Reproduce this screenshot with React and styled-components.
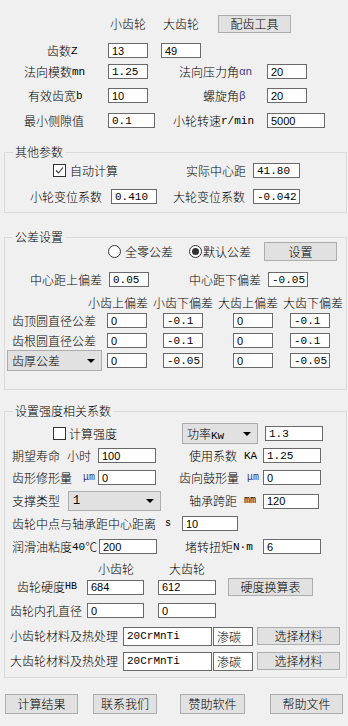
import React from "react";
import styled, { createGlobalStyle } from "styled-components";

const GlobalStyle = createGlobalStyle`
  html, body {
    margin: 0;
    padding: 0;
    background: #f0f0f0;
  }
  body {
    font-family: "Noto Sans CJK SC", "Noto Sans", sans-serif;
    font-size: 12px;
    font-weight: 300;
    color: #000;
  }
`;

const Window = styled.div`
  width: 348px;
  height: 726px;
  overflow: hidden;
  background: #f0f0f0;
`;

const Row = styled.div`
  display: flex;
  align-items: center;
  height: ${(p) => p.$h || 15}px;
  margin-top: ${(p) => p.$mt || 0}px;
  padding-left: ${(p) => p.$pl || 0}px;
`;

const Label = styled.span`
  flex: none;
  display: flex;
  align-items: center;
  box-sizing: border-box;
  width: ${(p) => (p.$w ? `${p.$w}px` : "auto")};
  padding-left: ${(p) => p.$pl || 0}px;
  margin-left: ${(p) => p.$ml || 0}px;
  white-space: nowrap;
  line-height: 14px;
  font-size: 12px;
`;

const Unit = styled.span`
  margin-left: ${(p) => p.$ml || 0}px;
  font-family: "Liberation Mono", monospace;
  font-weight: 400;
  font-size: ${(p) => p.$size || 10}px;
  color: ${(p) => p.$color || "#000"};
`;

const Field = styled.input`
  flex: none;
  box-sizing: border-box;
  width: ${(p) => p.$w}px;
  height: ${(p) => p.$h || 15}px;
  margin: 0 0 0 ${(p) => p.$ml || 0}px;
  padding: 0 0 0 3px;
  border: 1px solid #6a6a6a;
  border-radius: 0;
  background: #fff;
  color: #000;
  outline: none;
  font-family: ${(p) =>
    p.$mono
      ? `"Liberation Mono", monospace`
      : `"Liberation Sans", "Noto Sans CJK SC", sans-serif`};
  font-weight: ${(p) => (p.$cjk ? 300 : 400)};
  font-size: ${(p) => (p.$cjk ? 12 : 11)}px;
`;

const Btn = styled.button`
  flex: none;
  box-sizing: border-box;
  width: ${(p) => p.$w}px;
  height: ${(p) => p.$h || 20}px;
  margin-left: ${(p) => p.$ml || 0}px;
  padding: 0;
  background: #e1e1e1;
  border: 1px solid #adadad;
  border-radius: 0;
  color: #000;
  font-family: "Noto Sans CJK SC", sans-serif;
  font-weight: 300;
  font-size: 12px;
  line-height: 1;
`;

const Group = styled.div`
  position: relative;
  box-sizing: border-box;
  width: 343px;
  height: ${(p) => p.$h}px;
  margin: ${(p) => p.$mt}px 0 0 4px;
  border: 1px solid #dcdcdc;
`;

const GroupTitle = styled.span`
  position: absolute;
  top: -8px;
  left: 8px;
  padding: 0 2px;
  background: #f0f0f0;
  line-height: 14px;
  white-space: nowrap;
`;

const CheckBox = styled.span`
  flex: none;
  box-sizing: border-box;
  width: 13px;
  height: 13px;
  border: 1px solid #333;
  background: #fff;
  display: flex;
  align-items: center;
  justify-content: center;
`;

const Radio = styled.span`
  flex: none;
  box-sizing: border-box;
  width: 13px;
  height: 13px;
  margin-left: ${(p) => p.$ml || 0}px;
  border: 1px solid #333;
  border-radius: 50%;
  background: #fff;
  display: flex;
  align-items: center;
  justify-content: center;

  &::after {
    content: "";
    width: 7px;
    height: 7px;
    border-radius: 50%;
    background: ${(p) => (p.$on ? "#333" : "transparent")};
  }
`;

const Combo = styled.div`
  flex: none;
  box-sizing: border-box;
  width: ${(p) => p.$w}px;
  height: ${(p) => p.$h || 21}px;
  margin-left: ${(p) => p.$ml || 0}px;
  padding: 0 6px 0 4px;
  display: flex;
  align-items: center;
  justify-content: space-between;
  background: #e1e1e1;
  border: 1px solid #adadad;
  white-space: nowrap;
  font-family: ${(p) =>
    p.$mono ? `"Liberation Mono", monospace` : `"Noto Sans CJK SC", sans-serif`};
  font-weight: ${(p) => (p.$mono ? 400 : 300)};
  font-size: 12px;
`;

const Arrow = styled.span`
  width: 0;
  height: 0;
  border-left: 4px solid transparent;
  border-right: 4px solid transparent;
  border-top: 4px solid #000;
`;

const Box = ({ v, ...rest }) => (
  <Field
    readOnly
    defaultValue={v}
    $mono={/[.A-Za-z]/.test(v)}
    $cjk={/[\u4e00-\u9fff]/.test(v)}
    {...rest}
  />
);

const Check = ({ on, text, w, pl, gap }) => (
  <Label $w={w} $pl={pl}>
    <CheckBox>
      {on && (
        <svg width="9" height="9" viewBox="0 0 9 9">
          <path d="M1 4.5 L3.5 7 L8 1.5" stroke="#333" strokeWidth="1.1" fill="none" />
        </svg>
      )}
    </CheckBox>
    <Label $ml={gap}>{text}</Label>
  </Label>
);

const ToleranceRow = ({ label, mt, vals, combo }) => (
  <Row $mt={mt} $h={combo ? 21 : 15}>
    {combo ? (
      <>
        <Combo $w={95} $ml={2}>
          {label}
          <Arrow />
        </Combo>
        <Box v={vals[0]} $w={40} $ml={5} />
      </>
    ) : (
      <>
        <Label $w={102} $pl={7}>{label}</Label>
        <Box v={vals[0]} $w={40} />
      </>
    )}
    <Box v={vals[1]} $w={40} $ml={16} />
    <Box v={vals[2]} $w={40} $ml={30} />
    <Box v={vals[3]} $w={40} $ml={17} />
  </Row>
);

const MaterialRow = ({ label, mt }) => (
  <Row $mt={mt} $h={20}>
    <Label $w={118} $pl={5}>{label}</Label>
    <Box v="20CrMnTi" $w={89} $h={19} />
    <Box v="渗碳" $w={40} $h={19} $ml={1} />
    <Btn $w={83} $h={18} $ml={4}>选择材料</Btn>
  </Row>
);

export default function App() {
  return (
    <Window>
      <GlobalStyle />

      <Row $mt={15} $h={18} $pl={110}>
        <Label $w={53}>小齿轮</Label>
        <Label $w={55}>大齿轮</Label>
        <Btn $w={73} $h={18}>配齿工具</Btn>
      </Row>
      <Row $mt={10}>
        <Label $w={108} $pl={47}>
          齿数<Unit $size={11}>Z</Unit>
        </Label>
        <Box v="13" $w={40} />
        <Box v="49" $w={40} $ml={13} />
      </Row>
      <Row $mt={6}>
        <Label $w={108} $pl={24}>
          法向模数<Unit $size={11}>mn</Unit>
        </Label>
        <Box v="1.25" $w={40} />
        <Label $w={119} $pl={31}>
          法向压力角<Unit $size={11} $color="#3a3a8a">αn</Unit>
        </Label>
        <Box v="20" $w={40} />
      </Row>
      <Row $mt={9}>
        <Label $w={108} $pl={28}>
          有效齿宽<Unit $size={11}>b</Unit>
        </Label>
        <Box v="10" $w={40} />
        <Label $w={119} $pl={55}>
          螺旋角<Unit $size={11} $color="#3a3a8a">β</Unit>
        </Label>
        <Box v="20" $w={40} />
      </Row>
      <Row $mt={10}>
        <Label $w={108} $pl={24}>最小侧隙值</Label>
        <Box v="0.1" $w={47} />
        <Label $w={112} $pl={18}>
          小轮转速<Unit $size={11}>r/min</Unit>
        </Label>
        <Box v="5000" $w={58} />
      </Row>

      <Group $mt={24} $h={61}>
        <GroupTitle>其他参数</GroupTitle>
        <Row $mt={10}>
          <Check on text="自动计算" w={181} pl={48} gap={4} />
          <Label $w={67}>实际中心距</Label>
          <Box v="41.80" $w={47} />
        </Row>
        <Row $mt={11}>
          <Label $w={106} $pl={25}>小轮变位系数</Label>
          <Box v="0.410" $w={46} />
          <Label $w={96} $pl={16}>大轮变位系数</Label>
          <Box v="-0.042" $w={47} />
        </Row>
      </Group>

      <Group $mt={24} $h={153}>
        <GroupTitle>公差设置</GroupTitle>
        <Row $mt={4} $h={19} $pl={103}>
          <Radio />
          <Label $ml={4}>全零公差</Label>
          <Radio $on $ml={16} />
          <Label $ml={1}>默认公差</Label>
          <Btn $w={73} $h={19} $ml={13}>设置</Btn>
        </Row>
        <Row $mt={11}>
          <Label $w={104} $pl={25}>中心距上偏差</Label>
          <Box v="0.05" $w={40} />
          <Label $w={119} $pl={40}>中心距下偏差</Label>
          <Box v="-0.05" $w={40} />
        </Row>
        <Row $mt={9} $h={13} $pl={83}>
          <Label $w={65}>小齿上偏差</Label>
          <Label $w={65}>小齿下偏差</Label>
          <Label $w={65}>大齿上偏差</Label>
          <Label $w={62}>大齿下偏差</Label>
        </Row>
        <ToleranceRow mt={4} label="齿顶圆直径公差" vals={["0", "-0.1", "0", "-0.1"]} />
        <ToleranceRow mt={5} label="齿根圆直径公差" vals={["0", "-0.1", "0", "-0.1"]} />
        <ToleranceRow mt={2} combo label="齿厚公差" vals={["0", "-0.05", "0", "-0.05"]} />
      </Group>

      <Group $mt={21} $h={267}>
        <GroupTitle>设置强度相关系数</GroupTitle>
        <Row $mt={11} $h={21}>
          <Check text="计算强度" w={177} pl={48} gap={3} />
          <Combo $w={76}>
            <span>
              功率<Unit $size={11}>Kw</Unit>
            </span>
            <Arrow />
          </Combo>
          <Box v="1.3" $w={58} $ml={7} />
        </Row>
        <Row $mt={4}>
          <Label $w={93} $pl={7}>
            期望寿命<Label $ml={7}>小时</Label>
          </Label>
          <Box v="100" $w={58} />
          <Label $w={107} $pl={33}>
            使用系数<Unit $ml={7} $size={11}>KA</Unit>
          </Label>
          <Box v="1.25" $w={58} />
        </Row>
        <Row $mt={7}>
          <Label $w={93} $pl={7}>
            齿形修形量<Unit $ml={11} $color="#3a3a8a">μm</Unit>
          </Label>
          <Box v="0" $w={58} />
          <Label $w={107} $pl={23}>
            齿向鼓形量<Unit $ml={8} $color="#3a3a8a">μm</Unit>
          </Label>
          <Box v="0" $w={58} />
        </Row>
        <Row $mt={6} $h={20}>
          <Label $w={63} $pl={7}>支撑类型</Label>
          <Combo $w={93} $h={20} $mono>
            1
            <Arrow />
          </Combo>
          <Label $w={102} $pl={28}>
            轴承跨距<Unit $ml={7}>mm</Unit>
          </Label>
          <Box v="120" $w={56} />
        </Row>
        <Row $mt={5}>
          <Label $w={177} $pl={7}>
            齿轮中点与轴承距中心距离<Unit $ml={9}>s</Unit>
          </Label>
          <Box v="10" $w={56} />
        </Row>
        <Row $mt={8}>
          <Label $w={94} $pl={7}>
            润滑油粘度<Unit $size={11}>40</Unit>℃
          </Label>
          <Box v="200" $w={58} />
          <Label $w={106} $pl={28}>
            堵转扭矩<Unit $size={11}>N·m</Unit>
          </Label>
          <Box v="6" $w={58} />
        </Row>
        <Row $mt={8} $h={14} $pl={93}>
          <Label $w={71}>小齿轮</Label>
          <Label>大齿轮</Label>
        </Row>
        <Row $mt={2} $h={18}>
          <Label $w={82} $pl={12}>
            齿轮硬度<Unit>HB</Unit>
          </Label>
          <Box v="684" $w={57} />
          <Box v="612" $w={58} $ml={14} />
          <Btn $w={85} $h={18} $ml={12}>硬度换算表</Btn>
        </Row>
        <Row $mt={7}>
          <Label $w={82} $pl={5}>齿轮内孔直径</Label>
          <Box v="0" $w={57} />
          <Box v="0" $w={58} $ml={14} />
        </Row>
        <MaterialRow mt={8} label="小齿轮材料及热处理" />
        <MaterialRow mt={5} label="大齿轮材料及热处理" />
      </Group>

      <Row $mt={16} $h={20} $pl={5}>
        <Btn $w={73}>计算结果</Btn>
        <Btn $w={64} $ml={15}>联系我们</Btn>
        <Btn $w={65} $ml={23}>赞助软件</Btn>
        <Btn $w={73} $ml={25}>帮助文件</Btn>
      </Row>
    </Window>
  );
}
